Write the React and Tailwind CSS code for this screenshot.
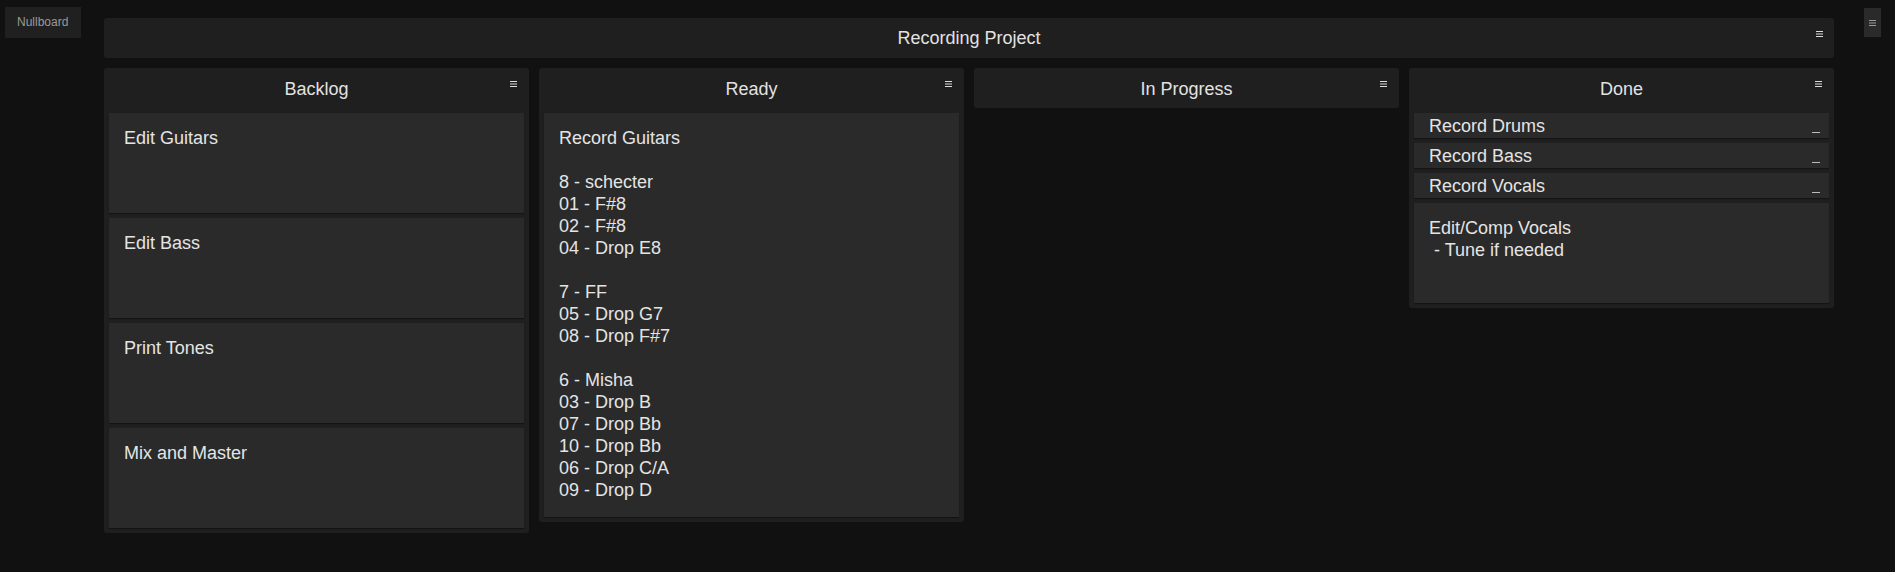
import React from "react";

const font = { fontFamily: '"Liberation Sans", Arial, sans-serif' };

const lists = [
  {
    title: "Backlog",
    notes: [
      { text: "Edit Guitars" },
      { text: "Edit Bass" },
      { text: "Print Tones" },
      { text: "Mix and Master" },
    ],
  },
  {
    title: "Ready",
    notes: [
      {
        text: "Record Guitars\n\n8 - schecter\n01 - F#8\n02 - F#8\n04 - Drop E8\n\n7 - FF\n05 - Drop G7\n08 - Drop F#7\n\n6 - Misha\n03 - Drop B\n07 - Drop Bb\n10 - Drop Bb\n06 - Drop C/A\n09 - Drop D",
      },
    ],
  },
  { title: "In Progress", notes: [] },
  {
    title: "Done",
    notes: [
      { text: "Record Drums", min: true },
      { text: "Record Bass", min: true },
      { text: "Record Vocals", min: true },
      { text: "Edit/Comp Vocals\n - Tune if needed" },
    ],
  },
];

const MenuIcon = ({ className = "", color = "#dcdcdc" }) => (
  <svg width="7" height="6" viewBox="0 0 7 6" className={className}>
    <rect x="0" y="0" width="7" height="1" fill={color} />
    <rect x="0" y="2.5" width="7" height="1" fill={color} />
    <rect x="0" y="5" width="7" height="1" fill={color} />
  </svg>
);

const Note = ({ note }) => {
  if (note.min) {
    return (
      <div className="relative h-[25px] flex items-center px-[15px] bg-[#2a2a2a] shadow-[0_1px_1px_rgba(0,0,0,0.35)] overflow-hidden">
        <span className="text-[18px] leading-[22px] text-[#e4e4e4] whitespace-nowrap">
          {note.text}
        </span>
        <div className="absolute right-[9px] bottom-[5px] w-[8px] h-px bg-[#bdbdbd]" />
      </div>
    );
  }
  return (
    <div className="min-h-[100px] px-[15px] pt-[14px] pb-[16px] bg-[#2a2a2a] shadow-[0_1px_1px_rgba(0,0,0,0.35)]">
      <div className="text-[18px] leading-[22px] text-[#e4e4e4] whitespace-pre-wrap">
        {note.text}
      </div>
    </div>
  );
};

const List = ({ list }) => (
  <div className="w-[425px] rounded-[3px] bg-[#1f1f1f]">
    <div className="relative h-[40px] pt-[2px] flex items-center justify-center">
      <span className="text-[18px] text-[#e2e2e2]">{list.title}</span>
      <MenuIcon className="absolute right-[12px] top-[13px]" />
    </div>
    {list.notes.length > 0 && (
      <div className="flex flex-col gap-[5px] px-[5px] pt-[5px] pb-[5px]">
        {list.notes.map((n, i) => (
          <Note key={i} note={n} />
        ))}
      </div>
    )}
  </div>
);

export default function App() {
  return (
    <div className="min-h-screen w-full bg-[#111111] flex items-start" style={font}>
      <div className="ml-[5px] mt-[7px] w-[76px] h-[31px] bg-[#202020] pt-[6px] pl-[12px] text-[12px] text-[#9a9a9a] shrink-0">
        Nullboard
      </div>

      <div className="ml-[23px] mt-[18px] w-[1730px] shrink-0">
        <div className="relative h-[40px] pt-[1px] rounded-[3px] bg-[#1f1f1f] flex items-center justify-center">
          <span className="text-[18px] text-[#e2e2e2]">Recording Project</span>
          <MenuIcon className="absolute right-[11px] top-[13px]" />
        </div>

        <div className="mt-[10px] flex items-start gap-[10px]">
          {lists.map((l) => (
            <List key={l.title} list={l} />
          ))}
        </div>
      </div>

      <div className="ml-[30px] mt-[8px] w-[17px] h-[29px] bg-[#2a2a2a] flex items-center justify-center shrink-0">
        <MenuIcon color="#9a9a9a" />
      </div>
    </div>
  );
}
